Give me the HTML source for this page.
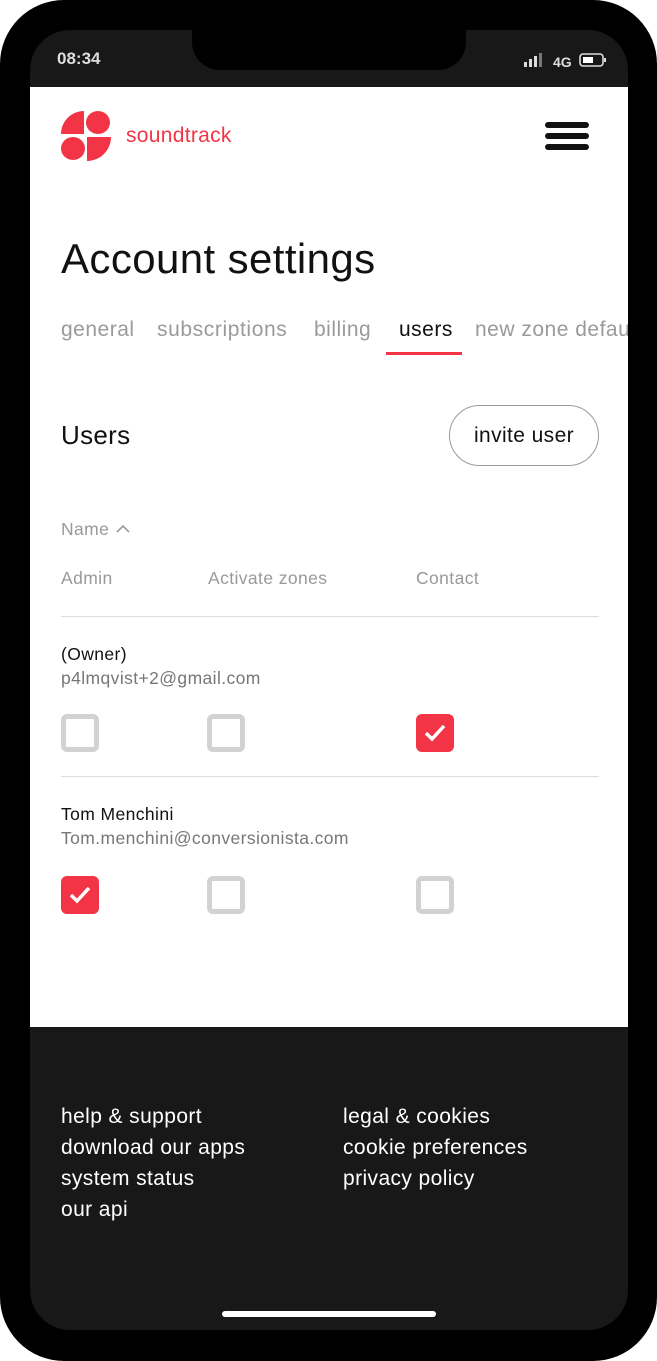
<!DOCTYPE html>
<html><head><meta charset="utf-8"><style>
*{margin:0;padding:0;box-sizing:border-box}
body{width:657px;height:1361px;background:#fff;font-family:"Liberation Sans",sans-serif;position:relative;overflow:hidden}
.phone{position:absolute;left:0;top:0;width:657px;height:1361px;background:#000;border-radius:64px}
.screen{position:absolute;left:30px;top:30px;width:598px;height:1300px;border-radius:40px;overflow:hidden;background:#181818}
.notch{position:absolute;left:162px;top:0;width:274px;height:40px;background:#000;border-radius:0 0 28px 28px}
.abs{position:absolute}
.white{position:absolute;left:0;top:57px;width:598px;height:940px;background:#fff}
.t{position:absolute;white-space:nowrap}
.cb{position:absolute;width:38px;height:38px;border:5px solid #d2d2d2;border-radius:6px}
.cb.on{background:#f33446;border:none}
.foot{color:#fff;font-size:21px;line-height:31px;letter-spacing:0.4px}
.sm{font-size:17.5px;letter-spacing:0.4px}
</style></head><body>
<div class="phone"><div class="screen">
<div class="notch"></div>
<div class="t" style="left:27px;top:19px;color:#ddd;font-size:17px;font-weight:bold">08:34</div>
<svg class="abs" style="left:494px;top:23px" width="90" height="16">
<rect x="0" y="9" width="3" height="5" fill="#ddd"/><rect x="5" y="6" width="3" height="8" fill="#ddd"/><rect x="10" y="3" width="3" height="11" fill="#ddd"/><rect x="15" y="0" width="3" height="14" fill="#777"/>
<text x="29" y="14" fill="#ddd" font-size="14" font-weight="bold" font-family="Liberation Sans">4G</text>
<rect x="56" y="1" width="23" height="12" rx="3" fill="none" stroke="#ddd" stroke-width="1.6"/><rect x="59" y="4" width="10" height="6" fill="#fff"/><rect x="80" y="5" width="2" height="4" fill="#ddd"/>
</svg>
<div class="white">
<svg class="abs" style="left:31px;top:24px" width="50" height="50">
<path d="M23,0 V23 H0 A23,23 0 0 1 23,0Z" fill="#f33446"/>
<ellipse cx="37" cy="11.5" rx="12" ry="11.5" fill="#f33446"/>
<ellipse cx="12" cy="37.5" rx="12" ry="11.5" fill="#f33446"/>
<path d="M26,26 H50 A24,24 0 0 1 26,50Z" fill="#f33446"/>
</svg>
<div class="t" style="left:96px;top:37px;color:#f33446;font-size:21px;letter-spacing:0.3px">soundtrack</div>
<div class="abs" style="left:515px;top:35px;width:44px;height:6px;background:#111;border-radius:3px"></div>
<div class="abs" style="left:515px;top:46px;width:44px;height:6px;background:#111;border-radius:3px"></div>
<div class="abs" style="left:515px;top:57px;width:44px;height:6px;background:#111;border-radius:3px"></div>
<div class="t" style="left:31px;top:148px;font-size:42px;letter-spacing:0.4px;color:#111">Account settings</div>
<div class="t" style="left:31px;top:231px;font-size:21px;letter-spacing:0.5px;color:#9a9a9a">general</div>
<div class="t" style="left:127px;top:231px;font-size:21px;letter-spacing:0.6px;color:#9a9a9a">subscriptions</div>
<div class="t" style="left:284px;top:231px;font-size:21px;letter-spacing:0.5px;color:#9a9a9a">billing</div>
<div class="t" style="left:369px;top:231px;font-size:21px;letter-spacing:0.5px;color:#111">users</div>
<div class="abs" style="left:356px;top:265px;width:76px;height:3px;background:#f33446"></div>
<div class="t" style="left:445px;top:231px;font-size:21px;letter-spacing:0.5px;color:#9a9a9a">new zone defaults</div>
<div class="t" style="left:31px;top:333px;font-size:26px;letter-spacing:0.3px;color:#111">Users</div>
<div class="abs" style="left:419px;top:318px;width:150px;height:61px;border:1.5px solid #999;border-radius:31px;display:flex;align-items:center;justify-content:center;font-size:21px;letter-spacing:0.4px;color:#111">invite user</div>
<div class="t sm" style="left:31px;top:432px;color:#999">Name</div>
<svg class="abs" style="left:86px;top:437px" width="14" height="10"><path d="M1,8 L7,2 L13,8" fill="none" stroke="#999" stroke-width="1.6"/></svg>
<div class="t sm" style="left:31px;top:481px;color:#999">Admin</div>
<div class="t sm" style="left:178px;top:481px;color:#999">Activate zones</div>
<div class="t sm" style="left:386px;top:481px;color:#999">Contact</div>
<div class="abs" style="left:31px;top:529px;width:538px;height:1px;background:#ddd"></div>
<div class="t sm" style="left:31px;top:557px;color:#111">(Owner)</div>
<div class="t sm" style="left:31px;top:581px;color:#777">p4lmqvist+2@gmail.com</div>
<div class="cb" style="left:31px;top:627px"></div>
<div class="cb" style="left:177px;top:627px"></div>
<div class="cb on" style="left:386px;top:627px"><svg width="38" height="38"><path d="M10,19 L16,25 L28,12" fill="none" stroke="#fff" stroke-width="3.5"/></svg></div>
<div class="abs" style="left:31px;top:689px;width:538px;height:1px;background:#ddd"></div>
<div class="t sm" style="left:31px;top:717px;color:#111">Tom Menchini</div>
<div class="t sm" style="left:31px;top:741px;color:#777">Tom.menchini@conversionista.com</div>
<div class="cb on" style="left:31px;top:789px"><svg width="38" height="38"><path d="M10,19 L16,25 L28,12" fill="none" stroke="#fff" stroke-width="3.5"/></svg></div>
<div class="cb" style="left:177px;top:789px"></div>
<div class="cb" style="left:386px;top:789px"></div>
</div>
<div class="t foot" style="left:31px;top:1071px">help &amp; support<br>download our apps<br>system status<br>our api</div>
<div class="t foot" style="left:313px;top:1071px">legal &amp; cookies<br>cookie preferences<br>privacy policy</div>
<div class="abs" style="left:192px;top:1281px;width:214px;height:6px;background:#fff;border-radius:3px"></div>
</div></div>
</body></html>
